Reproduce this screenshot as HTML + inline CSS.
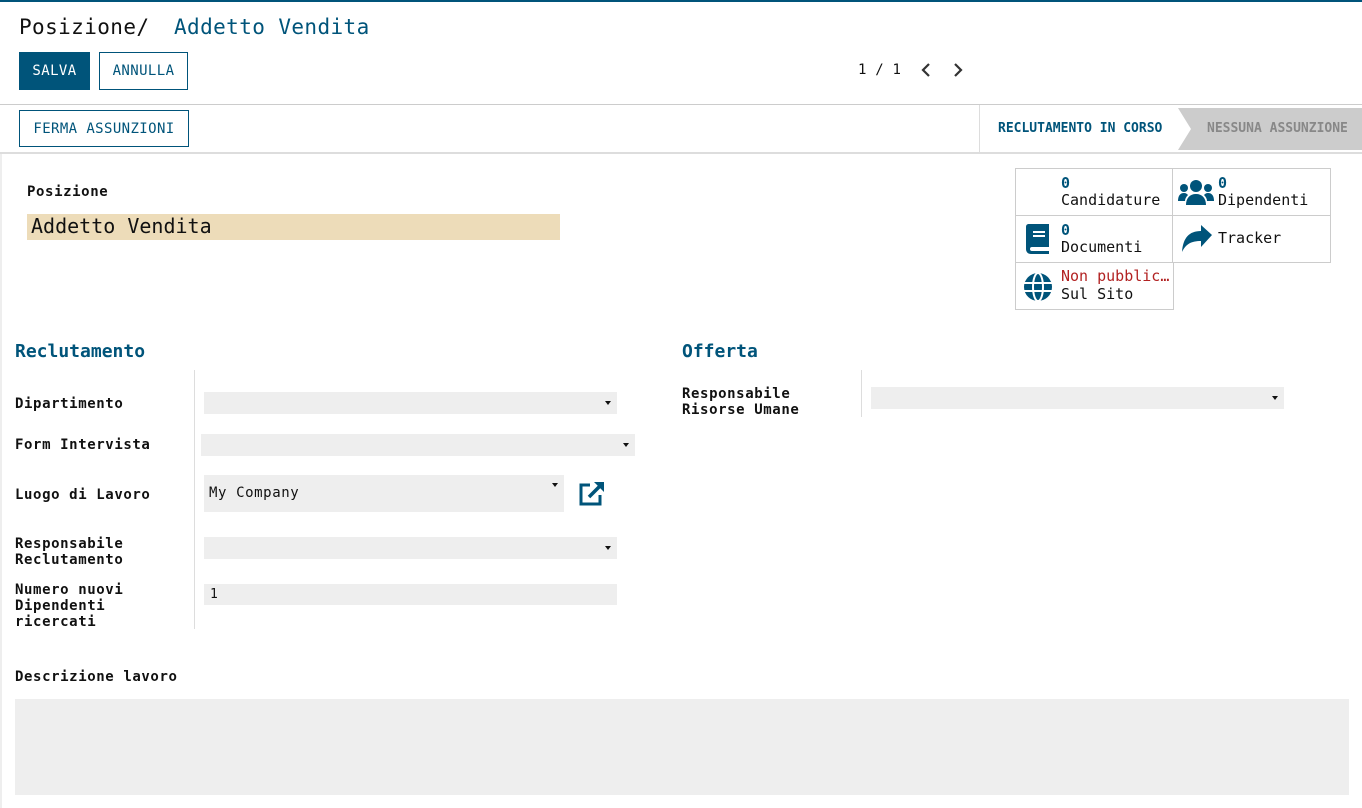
<!DOCTYPE html>
<html><head><meta charset="utf-8"><style>
*{margin:0;padding:0;box-sizing:border-box}
body{width:1362px;height:808px;overflow:hidden;background:#fff;font-family:"DejaVu Sans Mono","Liberation Mono",monospace;color:#111;position:relative}
.a{position:absolute;white-space:nowrap}
.lbl{font-size:14px;font-weight:bold;letter-spacing:.6px;line-height:16px}
.in{position:absolute;background:#eee;height:22px}
.car{position:absolute;right:6px;top:9px;width:0;height:0;border-left:3.5px solid transparent;border-right:3.5px solid transparent;border-top:4px solid #111}
.btn{position:absolute;font-size:14px;letter-spacing:.4px;border:1px solid #00547a;color:#00547a;text-align:center}
.blue{color:#00547a}
.stat{position:absolute;border:1px solid #ccc;width:158px;height:48px;font-size:15px;letter-spacing:0;line-height:17px}
</style></head><body>
<div class="a" style="left:0;top:0;width:1362px;height:2px;background:#00547a"></div>
<div class="a" style="left:19px;top:15px;font-size:21px;letter-spacing:.4px">Posizione/</div>
<div class="a blue" style="left:174px;top:15px;font-size:21px;letter-spacing:.4px">Addetto Vendita</div>
<div class="btn" style="left:19px;top:52px;width:71px;height:38px;line-height:37px;background:#00547a;color:#fff">SALVA</div>
<div class="btn" style="left:99px;top:52px;width:89px;height:38px;line-height:37px">ANNULLA</div>
<div class="a" style="left:858px;top:62px;font-size:14px;letter-spacing:.2px">1 / 1</div>
<svg class="a" style="left:920px;top:63px" width="12" height="14" viewBox="0 0 12 14"><path d="M9 1L3 7l6 6" fill="none" stroke="#333" stroke-width="2.2"/></svg>
<svg class="a" style="left:952px;top:63px" width="12" height="14" viewBox="0 0 12 14"><path d="M3 1l6 6-6 6" fill="none" stroke="#333" stroke-width="2.2"/></svg>
<div class="a" style="left:0;top:104px;width:1362px;height:1px;background:#ccc"></div>
<div class="btn" style="left:19px;top:110px;width:170px;height:37px;line-height:36px">FERMA ASSUNZIONI</div>
<div class="a" style="left:979px;top:105px;width:1px;height:47px;background:#ddd"></div>
<div class="a blue" style="left:998px;top:121px;font-size:13px;font-weight:bold;letter-spacing:0">RECLUTAMENTO IN CORSO</div>
<svg class="a" style="left:1178px;top:108px" width="184" height="42"><polygon points="0,0 184,0 184,42 0,42 13,21" fill="#ccc"/></svg>
<div class="a" style="left:1207px;top:121px;font-size:13px;font-weight:bold;letter-spacing:0;color:#888">NESSUNA ASSUNZIONE</div>
<div class="a" style="left:0;top:152px;width:1362px;height:2px;background:#ddd"></div>
<div class="a" style="left:0;top:154px;width:2px;height:654px;background:#eee"></div>

<div class="a lbl" style="left:27px;top:184px">Posizione</div>
<div class="a" style="left:27px;top:214px;width:533px;height:26px;background:#eddcb9;font-size:20px;letter-spacing:0;line-height:25px;padding-left:4px">Addetto Vendita</div>

<div class="stat" style="left:1015px;top:168px"><div class="a blue" style="left:45px;top:6px;font-weight:bold">0</div><div class="a" style="left:45px;top:23px">Candidature</div></div>
<div class="stat" style="left:1172px;top:168px;width:159px"><svg class="a" style="left:4px;top:9px" width="38" height="28" viewBox="0 0 38 28"><circle cx="19" cy="8" r="6" fill="#00547a"/><circle cx="7" cy="10" r="4" fill="#00547a"/><circle cx="31" cy="10" r="4" fill="#00547a"/><path d="M9 27c0-7 4-11 10-11s10 4 10 11z M1 23c0-5 2-8 6-8 2 0 3 1 4 2-2 2-3 4-3 6z M37 23c0-5-2-8-6-8-2 0-3 1-4 2 2 2 3 4 3 6z" fill="#00547a"/></svg><div class="a blue" style="left:45px;top:6px;font-weight:bold">0</div><div class="a" style="left:45px;top:23px">Dipendenti</div></div>
<div class="stat" style="left:1015px;top:215px"><svg class="a" style="left:10px;top:8px" width="26" height="30" viewBox="0 0 26 30"><path d="M3 0h20v23H6a2 2 0 000 4h17v3H5c-3 0-5-2-5-5V3c0-2 1-3 3-3z" fill="#00547a"/><rect x="7" y="7" width="12" height="2" fill="#fff"/><rect x="7" y="11" width="12" height="2" fill="#fff"/></svg><div class="a blue" style="left:45px;top:6px;font-weight:bold">0</div><div class="a" style="left:45px;top:23px">Documenti</div></div>
<div class="stat" style="left:1172px;top:215px;width:159px"><svg class="a" style="left:8px;top:9px" width="32" height="28" viewBox="0 0 32 28"><path d="M31 10L20 0v6C8 6 2 13 1 27c4-8 9-11 19-11v6z" fill="#00547a"/></svg><div class="a" style="left:45px;top:14px">Tracker</div></div>
<div class="stat" style="left:1015px;top:262px;width:159px"><svg class="a" style="left:7px;top:9px" width="30" height="30" viewBox="0 0 30 30"><circle cx="15" cy="15" r="14" fill="#00547a"/><g fill="none" stroke="#fff" stroke-width="2"><ellipse cx="15" cy="15" rx="5" ry="14"/><path d="M1 11h28M1 19h28"/></g></svg><div class="a" style="left:45px;top:5px;color:#b22222">Non pubblic…</div><div class="a" style="left:45px;top:23px">Sul Sito</div></div>

<div class="a blue" style="left:15px;top:341px;font-size:18px;font-weight:bold;letter-spacing:0">Reclutamento</div>
<div class="a blue" style="left:682px;top:341px;font-size:18px;font-weight:bold;letter-spacing:0">Offerta</div>
<div class="a" style="left:194px;top:370px;width:1px;height:259px;background:#ddd"></div>
<div class="a" style="left:861px;top:370px;width:1px;height:47px;background:#ddd"></div>

<div class="a lbl" style="left:15px;top:396px">Dipartimento</div>
<div class="in" style="left:204px;top:392px;width:413px"><span class="car"></span></div>
<div class="a lbl" style="left:15px;top:437px">Form Intervista</div>
<div class="in" style="left:201px;top:434px;width:434px"><span class="car"></span></div>
<div class="a lbl" style="left:15px;top:487px">Luogo di Lavoro</div>
<div class="in" style="left:204px;top:475px;width:360px;height:37px;font-size:14px;letter-spacing:.6px;line-height:37px;padding-left:5px">My Company<span class="car" style="top:8px"></span></div>
<svg class="a" style="left:579px;top:481px" width="26" height="25" viewBox="0 0 26 25"><path d="M11 4H2v19h19v-9" fill="none" stroke="#00547a" stroke-width="3"/><path d="M15 1h10v10z" fill="#00547a"/><path d="M23 3L10 16" stroke="#00547a" stroke-width="3.5"/></svg>
<div class="a lbl" style="left:15px;top:536px">Responsabile<br>Reclutamento</div>
<div class="in" style="left:204px;top:537px;width:413px"><span class="car"></span></div>
<div class="a lbl" style="left:15px;top:582px">Numero nuovi<br>Dipendenti<br>ricercati</div>
<div class="in" style="left:204px;top:584px;width:413px;height:21px;font-size:13px;line-height:22px;padding-left:6px">1</div>
<div class="a lbl" style="left:682px;top:386px">Responsabile<br>Risorse Umane</div>
<div class="in" style="left:871px;top:387px;width:413px"><span class="car"></span></div>

<div class="a lbl" style="left:15px;top:669px">Descrizione lavoro</div>
<div class="a" style="left:15px;top:699px;width:1334px;height:96px;background:#eee"></div>
</body></html>
